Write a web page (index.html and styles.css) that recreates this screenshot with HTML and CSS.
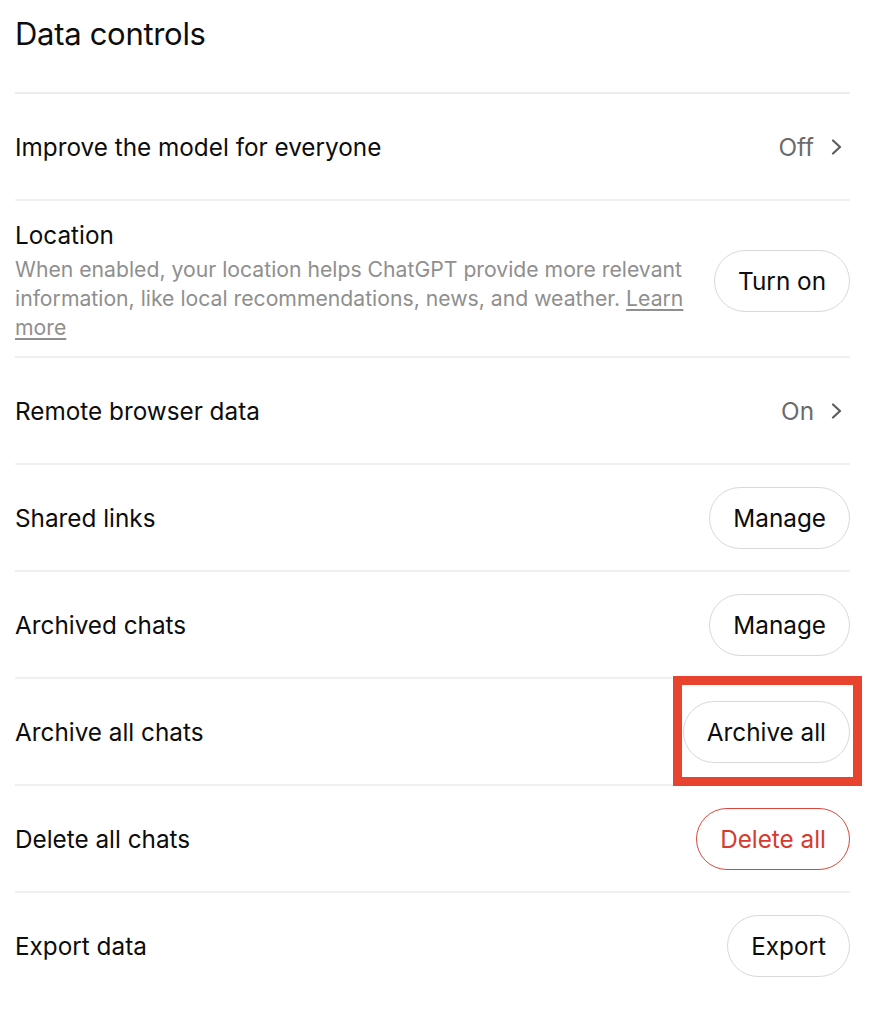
FILE: index.html
```html
<!DOCTYPE html>
<html lang="en">
<head>
    <meta charset="UTF-8">
    <meta name="viewport" content="width=device-width, initial-scale=1.0">
    <title>Data controls</title>
    <link rel="stylesheet" href="styles.css">
</head>
<body>
    <div class="settings-panel">
        <h1 class="panel-title">Data controls</h1>

        <div class="setting-row">
            <div class="setting-label">Improve the model for everyone</div>
            <div class="setting-value">
                Off
                <svg class="chevron" viewBox="0 0 11 16" width="11" height="16"><path d="M2 1.5 L9 8 L2 14.5" /></svg>
            </div>
        </div>

        <div class="setting-row setting-row-tall">
            <div class="setting-text">
                <div class="setting-label">Location</div>
                <p class="setting-desc">When enabled, your location helps ChatGPT provide more relevant information, like local recommendations, news, and weather. <a href="#" class="desc-link">Learn more</a></p>
            </div>
            <button class="pill-button">Turn on</button>
        </div>

        <div class="setting-row">
            <div class="setting-label">Remote browser data</div>
            <div class="setting-value">
                On
                <svg class="chevron" viewBox="0 0 11 16" width="11" height="16"><path d="M2 1.5 L9 8 L2 14.5" /></svg>
            </div>
        </div>

        <div class="setting-row">
            <div class="setting-label">Shared links</div>
            <button class="pill-button">Manage</button>
        </div>

        <div class="setting-row">
            <div class="setting-label">Archived chats</div>
            <button class="pill-button">Manage</button>
        </div>

        <div class="setting-row">
            <div class="setting-label">Archive all chats</div>
            <div class="highlight-wrap">
                <button class="pill-button">Archive all</button>
                <span class="highlight-box"></span>
            </div>
        </div>

        <div class="setting-row">
            <div class="setting-label">Delete all chats</div>
            <button class="pill-button pill-danger">Delete all</button>
        </div>

        <div class="setting-row no-border">
            <div class="setting-label">Export data</div>
            <button class="pill-button">Export</button>
        </div>
    </div>
</body>
</html>
```

FILE: styles.css
```css
body {
    margin: 0;
    background: #ffffff;
    color: #0d0d0d;
    font-family: 'Inter', 'Liberation Sans', sans-serif;
}

.settings-panel {
    padding: 0 20px 0 15px;
}

.panel-title {
    margin: 0;
    padding-top: 14px;
    height: 78px;
    font-size: 31px;
    font-weight: 400;
    line-height: 40px;
    border-bottom: 2px solid #ececec;
    letter-spacing: -0.3px;
}

.setting-row {
    display: flex;
    align-items: center;
    justify-content: space-between;
    gap: 24px;
    min-height: 105px;
    border-bottom: 2px solid #f0f0f0;
}

.setting-row-tall {
    padding: 18px 0 14px;
    min-height: 0;
}

.no-border {
    border-bottom: none;
}

.setting-text {
    flex: 1;
}

.setting-label {
    font-size: 24.3px;
    line-height: 32px;
}

.setting-desc {
    margin: 4px 0 0;
    font-size: 21.2px;
    line-height: 29px;
    color: #8f8f8f;
}

.desc-link {
    color: #8f8f8f;
    text-decoration: underline;
    text-underline-offset: 3px;
}

.setting-value {
    display: flex;
    align-items: center;
    gap: 17px;
    padding-right: 8px;
    font-size: 24.3px;
    color: #6b6b6b;
}

.chevron {
    fill: none;
    stroke: #5d5d5d;
    stroke-width: 2.2;
    stroke-linecap: round;
    stroke-linejoin: round;
}

.pill-button {
    flex-shrink: 0;
    font-family: inherit;
    font-size: 24.3px;
    line-height: 30px;
    color: #0d0d0d;
    background: #ffffff;
    border: 1.5px solid #d9d9d9;
    border-radius: 999px;
    padding: 15px 23px;
    cursor: pointer;
}

.pill-danger {
    color: #d63b2f;
    border-color: #d9473b;
}

.highlight-wrap {
    position: relative;
    display: flex;
}

.highlight-box {
    position: absolute;
    top: -25px;
    bottom: -23px;
    left: -10px;
    right: -12px;
    border: 9px solid #e8432e;
    pointer-events: none;
}
```
